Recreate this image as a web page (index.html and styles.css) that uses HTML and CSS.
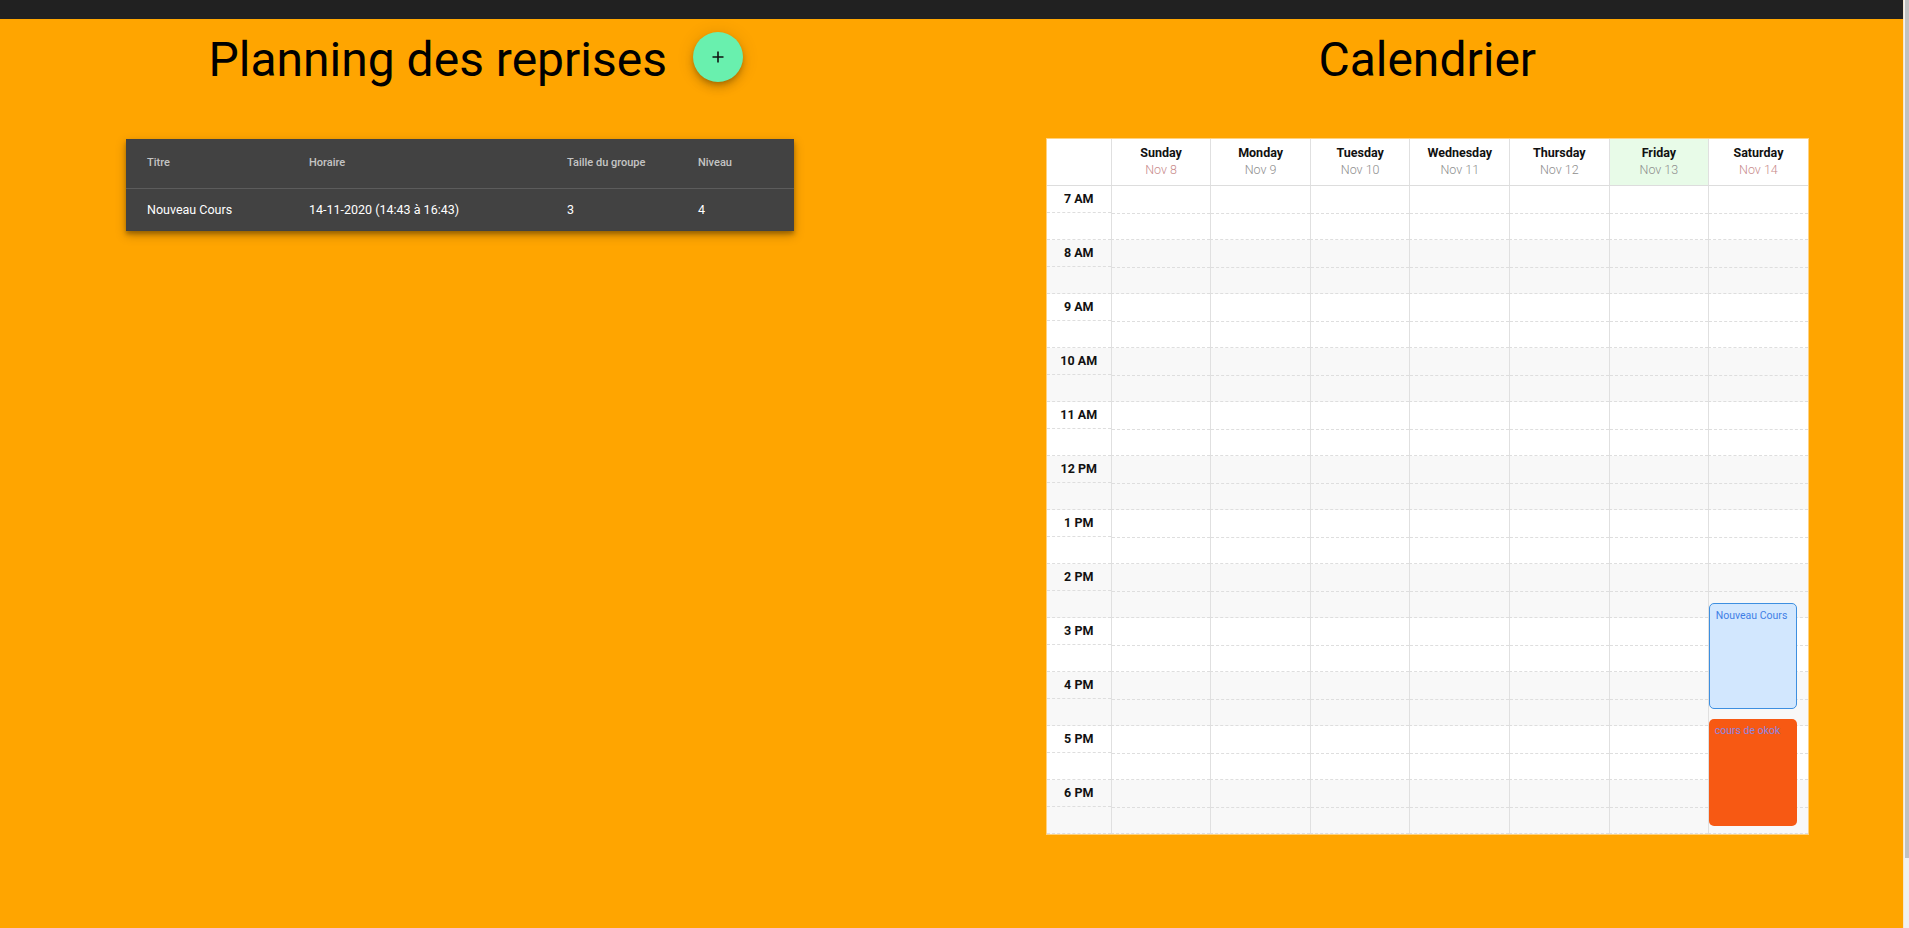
FILE: index.html
```html
<!DOCTYPE html>
<html lang="fr">
<head>
<meta charset="utf-8">
<title>Planning des reprises</title>
<link rel="stylesheet" href="styles.css">
</head>
<body>
<div class="page">
  <main class="app">
    <header class="topbar"></header>
    <div class="columns">
      <section class="col">
        <div class="col-head">
          <h1 class="title">Planning des reprises</h1>
          <button class="fab" aria-label="Ajouter">
            <svg width="12" height="12" viewBox="0 0 12 12"><path d="M6 0.5V11.5M0.5 6H11.5" stroke="#111" stroke-width="1.6" fill="none"/></svg>
          </button>
        </div>
        <div class="table">
          <div class="tr thead">
            <div class="th">Titre</div>
            <div class="th">Horaire</div>
            <div class="th">Taille du groupe</div>
            <div class="th">Niveau</div>
          </div>
          <div class="tr tbody">
            <div class="td">Nouveau Cours</div>
            <div class="td">14-11-2020 (14:43 à 16:43)</div>
            <div class="td">3</div>
            <div class="td">4</div>
          </div>
        </div>
      </section>
      <section class="col">
        <div class="col-head">
          <h1 class="title">Calendrier</h1>
        </div>
        <div class="calendar">
          <div class="cal-head">
            <div class="corner"></div>
            <div class="day"><span class="dname">Sunday</span><span class="ddate weekend">Nov 8</span></div>
            <div class="day"><span class="dname">Monday</span><span class="ddate">Nov 9</span></div>
            <div class="day"><span class="dname">Tuesday</span><span class="ddate">Nov 10</span></div>
            <div class="day"><span class="dname">Wednesday</span><span class="ddate">Nov 11</span></div>
            <div class="day"><span class="dname">Thursday</span><span class="ddate">Nov 12</span></div>
            <div class="day today"><span class="dname">Friday</span><span class="ddate">Nov 13</span></div>
            <div class="day"><span class="dname">Saturday</span><span class="ddate weekend">Nov 14</span></div>
          </div>
          <div class="cal-body">
            <div class="hour"><div class="time">7 AM</div><div class="cell"></div><div class="cell"></div><div class="cell"></div><div class="cell"></div><div class="cell"></div><div class="cell"></div><div class="cell"></div></div>
            <div class="hour alt"><div class="time">8 AM</div><div class="cell"></div><div class="cell"></div><div class="cell"></div><div class="cell"></div><div class="cell"></div><div class="cell"></div><div class="cell"></div></div>
            <div class="hour"><div class="time">9 AM</div><div class="cell"></div><div class="cell"></div><div class="cell"></div><div class="cell"></div><div class="cell"></div><div class="cell"></div><div class="cell"></div></div>
            <div class="hour alt"><div class="time">10 AM</div><div class="cell"></div><div class="cell"></div><div class="cell"></div><div class="cell"></div><div class="cell"></div><div class="cell"></div><div class="cell"></div></div>
            <div class="hour"><div class="time">11 AM</div><div class="cell"></div><div class="cell"></div><div class="cell"></div><div class="cell"></div><div class="cell"></div><div class="cell"></div><div class="cell"></div></div>
            <div class="hour alt"><div class="time">12 PM</div><div class="cell"></div><div class="cell"></div><div class="cell"></div><div class="cell"></div><div class="cell"></div><div class="cell"></div><div class="cell"></div></div>
            <div class="hour"><div class="time">1 PM</div><div class="cell"></div><div class="cell"></div><div class="cell"></div><div class="cell"></div><div class="cell"></div><div class="cell"></div><div class="cell"></div></div>
            <div class="hour alt"><div class="time">2 PM</div><div class="cell"></div><div class="cell"></div><div class="cell"></div><div class="cell"></div><div class="cell"></div><div class="cell"></div><div class="cell"></div></div>
            <div class="hour"><div class="time">3 PM</div><div class="cell"></div><div class="cell"></div><div class="cell"></div><div class="cell"></div><div class="cell"></div><div class="cell"></div><div class="cell"></div></div>
            <div class="hour alt"><div class="time">4 PM</div><div class="cell"></div><div class="cell"></div><div class="cell"></div><div class="cell"></div><div class="cell"></div><div class="cell"></div><div class="cell"></div></div>
            <div class="hour"><div class="time">5 PM</div><div class="cell"></div><div class="cell"></div><div class="cell"></div><div class="cell"></div><div class="cell"></div><div class="cell"></div><div class="cell"></div></div>
            <div class="hour alt"><div class="time">6 PM</div><div class="cell"></div><div class="cell"></div><div class="cell"></div><div class="cell"></div><div class="cell"></div><div class="cell"></div><div class="cell"></div></div>
            <div class="event ev-sat ev-blue" style="top:417px;height:106px">Nouveau Cours</div>
            <div class="event ev-sat ev-orange" style="top:533px;height:107px">cours de okok</div>
          </div>
        </div>
      </section>
    </div>
  </main>
  <div class="scrollbar"><div class="thumb"></div></div>
</div>
</body>
</html>
```
FILE: styles.css
```css
* { box-sizing: border-box; }
body {
  margin: 0;
  font-family: Roboto, "Noto Sans", Arial, sans-serif;
}
.page {
  display: flex;
  height: 928px;
  overflow: hidden;
}
.app {
  flex: 1;
  background: #ffa500;
  min-height: 928px;
}
.topbar {
  height: 19px;
  background: #212121;
}
.columns { display: flex; }
.col {
  flex: 1 1 0;
  padding-top: 13px;
}
.col-head {
  display: flex;
  justify-content: center;
  align-items: center;
  height: 56px;
  margin-bottom: 51px;
}
.title {
  margin: 0;
  font-size: 48px;
  font-weight: 400;
  line-height: 56px;
  color: #000;
}
.fab {
  width: 50px;
  height: 50px;
  border-radius: 50%;
  border: 0;
  padding: 0;
  margin: 0 0 7px 26px;
  background: #69f0ae;
  display: flex;
  align-items: center;
  justify-content: center;
  box-shadow: 0 3px 5px -1px rgba(0,0,0,.2), 0 6px 10px 0 rgba(0,0,0,.14), 0 1px 18px 0 rgba(0,0,0,.12);
}

/* table */
.table {
  margin-left: 126px;
  width: 668px;
  background: #424242;
  box-shadow: 0 3px 4px rgba(0,0,0,.25), 0 4px 10px rgba(0,0,0,.25);
}
.tr {
  display: grid;
  grid-template-columns: 162px 258px 131px 117px;
  align-items: center;
}
.thead {
  height: 50px;
  padding-bottom: 2px;
  border-bottom: 1px solid rgba(255,255,255,.14);
}
.tbody {
  height: 42px;
  padding-bottom: 2px;
}
.th, .td { padding-left: 21px; }
.th {
  font-size: 11px;
  font-weight: 500;
  color: rgba(255,255,255,.7);
}
.td {
  font-size: 12.5px;
  color: #fff;
}

/* calendar */
.calendar {
  width: 761px;
  margin: 0 auto;
  background: #fff;
  outline: 1px solid rgba(255,255,255,.5);
}
.cal-head, .hour {
  display: grid;
  grid-template-columns: 64px repeat(7, 1fr);
}
.cal-head {
  height: 47px;
  border-bottom: 1px solid #dddddd;
}
.day {
  display: flex;
  flex-direction: column;
  align-items: center;
  padding-top: 6px;
  border-left: 1px solid #e0e0e0;
}
.day.today { background: #e8fbe8; }
.dname {
  font-size: 12.5px;
  font-weight: 700;
  line-height: 16px;
  color: #111;
}
.ddate {
  font-size: 12.5px;
  font-weight: 300;
  line-height: 18px;
  color: #8e8e8e;
}
.ddate.weekend { color: #c98c8c; }
.cal-body { position: relative; }
.hour {
  height: 54px;
  background: #fff;
}
.hour.alt { background: #f8f8f8; }
.time {
  height: 54px;
  border-bottom: 1px dashed #dedede;
  font-size: 12.5px;
  font-weight: 700;
  color: #111;
  text-align: center;
  line-height: 26px;
}
.time::after {
  content: "";
  display: block;
  border-top: 1px dashed #dedede;
}
.cell {
  height: 54px;
  border-left: 1px solid #e0e0e0;
  border-bottom: 1px dashed #dedede;
}
.cell::before {
  content: "";
  display: block;
  height: 27px;
  border-bottom: 1px dashed #dedede;
}
.event {
  position: absolute;
  border-radius: 5px;
  font-size: 10.5px;
  padding: 5px 4px 5px 6px;
  line-height: 14px;
  white-space: nowrap;
  overflow: hidden;
}
.ev-sat {
  left: 662px;
  width: 88px;
}
.ev-blue {
  background: #d2e7fe;
  border: 1px solid #3d8fe0;
  color: #3f7fe6;
}
.ev-orange {
  background: #f75913;
  color: #8a86e2;
}

.scrollbar {
  width: 6px;
  background: #f1f1f1;
  border-left: 1px solid #f3e6cf;
}
.thumb {
  height: 858px;
  margin-left: 1px;
  background: #c1c1c1;
}
```
